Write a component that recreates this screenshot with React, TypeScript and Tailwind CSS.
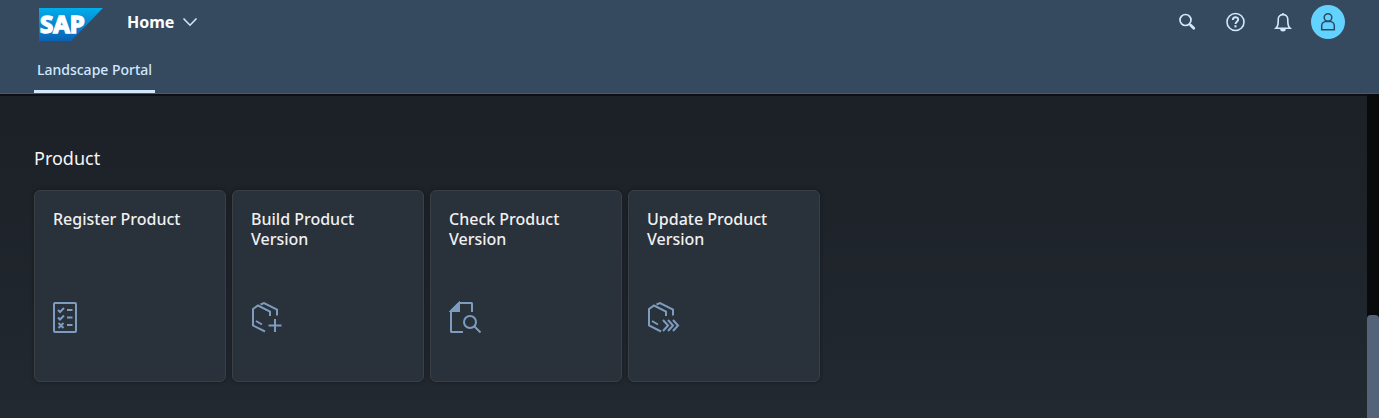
import type { ReactNode } from "react";

const iconProps = {
  fill: "none",
  stroke: "currentColor",
  strokeWidth: 2,
  "aria-hidden": true,
} as const;

function SapLogo() {
  return (
    <svg width="64" height="33" viewBox="0 0 64 33" role="img" aria-label="SAP">
      <defs>
        <linearGradient id="sap-blue" x1="0" y1="0" x2="0" y2="1">
          <stop offset="0" stopColor="#00aeea" />
          <stop offset="0.5" stopColor="#0a86d0" />
          <stop offset="1" stopColor="#0a62b4" />
        </linearGradient>
      </defs>
      <path d="M0 0H64L32 33H0Z" fill="url(#sap-blue)" />
      <text
        x="1"
        y="25"
        fill="#fff"
        stroke="#fff"
        strokeWidth="1.500"
        fontFamily="'Noto Sans', sans-serif"
        fontWeight="700"
        fontSize="24"
      >
        SAP
      </text>
    </svg>
  );
}

function ChecklistIcon() {
  return (
    <svg width="34" height="34" viewBox="0 0 34 34" {...iconProps}>
      <rect x="1" y="2" width="22" height="29" rx="1" />
      <path d="M5 9l2 2 4-4M5 16.500l2 2 4-4M5.500 22l5 5M10.500 22l-5 5M14 9h5.500M14 16.500h5.500M14 24h5.500" />
    </svg>
  );
}

function BoxOutline() {
  return <path d="M19 15V10.500L7 4.500 2 8V24.500L14 30.500M9.500 3.500L13 2 26 8.500V14.500M5 20l6 3.500" />;
}

function BoxAddIcon() {
  return (
    <svg width="34" height="34" viewBox="0 0 34 34" {...iconProps}>
      <BoxOutline />
      <path d="M24 18v13M17.500 24.500h13" />
    </svg>
  );
}

function BoxForwardIcon() {
  return (
    <svg width="34" height="34" viewBox="0 0 34 34" {...iconProps}>
      <BoxOutline />
      <path d="M16 19l5 5.500-5 5.500M21 19l5 5.500-5 5.500M26 19l5 5.500-5 5.500" />
    </svg>
  );
}

function DocumentSearchIcon() {
  return (
    <svg width="34" height="34" viewBox="0 0 34 34" {...iconProps}>
      <path d="M23 11V2.500Q23 2 22.500 2H10L2 10V30.500Q2 31 2.500 31H14" />
      <path d="M2 10L10 2V10Z" fill="currentColor" />
      <circle cx="21" cy="21" r="6" />
      <path d="M25.500 25.500l6 6" />
    </svg>
  );
}

function SearchIcon() {
  return (
    <svg width="18" height="18" viewBox="0 0 18 18" {...iconProps}>
      <circle cx="7.500" cy="7" r="5.500" strokeWidth="1.700" />
      <path d="M11.300 10.800l1.500 1.500" strokeWidth="1.600" />
      <path d="M12.700 12.200l3.100 3.100" strokeWidth="2.800" strokeLinecap="round" />
    </svg>
  );
}

function HelpIcon() {
  return (
    <svg width="20" height="20" viewBox="0 0 20 20" {...iconProps} strokeWidth="1.600">
      <circle cx="10.500" cy="10" r="8.500" />
      <path d="M7.800 8C7.800 4.300 13.200 4.400 13.200 7.600C13.200 9.700 10.500 9.600 10.500 12" strokeWidth="1.900" />
      <path d="M10.500 13.200v2.200" strokeWidth="2" />
    </svg>
  );
}

function BellIcon() {
  return (
    <svg width="18" height="20" viewBox="0 0 18 20" {...iconProps} strokeWidth="1.600">
      <path d="M9 1v1.500M2 16.200H16C13.500 14 13.800 12 13.800 7.500C13.800 1 4.200 1 4.200 7.500C4.200 12 4.500 14 2 16.200Z" />
      <path d="M7 17h4c0 2.300-4 2.300-4 0Z" fill="currentColor" />
    </svg>
  );
}

function PersonIcon() {
  return (
    <svg width="16" height="20" viewBox="0 0 16 20" {...iconProps} strokeWidth="1.500">
      <circle cx="8" cy="5.500" r="3.800" />
      <path d="M5 9.600C2.900 10.200 1.700 11.700 1.700 14V17.800H14.300V14C14.300 11.700 13.100 10.200 11 9.600Z" />
    </svg>
  );
}

function Tile({ title, icon }: { title: string; icon: ReactNode }) {
  return (
    <a
      href="#"
      className="flex h-48 w-48 flex-col justify-between rounded-md border border-[#3b4045] bg-[#29313a] px-[18px] pt-[18px] pb-[46px] shadow-[0_0_4px_rgba(0,0,0,0.35)]"
    >
      <h3 className="text-[16px] leading-5 font-medium text-[#f0f0f0]">{title}</h3>
      <span className="flex text-[#7d9cbf]">{icon}</span>
    </a>
  );
}

const tiles = [
  { title: "Register Product", icon: <ChecklistIcon /> },
  { title: "Build Product Version", icon: <BoxAddIcon /> },
  { title: "Check Product Version", icon: <DocumentSearchIcon /> },
  { title: "Update Product Version", icon: <BoxForwardIcon /> },
];

export default function App() {
  return (
    <div className="flex min-h-screen flex-col bg-[#1c2027] font-['Noto_Sans',sans-serif]">
      <header className="border-b border-[#465a70] bg-[#354a5f]">
        <div className="flex h-11 items-center justify-between pr-[34px] pl-[39px]">
          <div className="flex items-center gap-6">
            <a href="#" className="pt-1">
              <SapLogo />
            </a>
            <button type="button" className="flex items-center gap-2 text-[16px] leading-6 font-bold text-white">
              Home
              <svg width="16" height="10" viewBox="0 0 16 10" {...iconProps} strokeWidth="1.600" className="text-[#d1e8ff]">
                <path d="M1.500 1.500L8 8.200 14.500 1.500" />
              </svg>
            </button>
          </div>
          <div className="flex items-center text-[#d1e8ff]">
            <button type="button" aria-label="Search" className="flex w-12 justify-center">
              <SearchIcon />
            </button>
            <button type="button" aria-label="Help" className="flex w-12 justify-center">
              <HelpIcon />
            </button>
            <button type="button" aria-label="Notifications" className="flex w-12 justify-center">
              <BellIcon />
            </button>
            <button
              type="button"
              aria-label="Profile"
              className="ml-1 flex size-[34px] items-center justify-center rounded-full bg-[#64d2ff] text-[#2b4a63]"
            >
              <PersonIcon />
            </button>
          </div>
        </div>
        <nav className="flex pl-[34px]">
          <a
            href="#"
            aria-current="page"
            className="flex h-[49px] items-center rounded-t-sm border-b-3 border-[#d1e8ff] px-[3px] pt-1 text-[14px] font-medium text-[#d1e8ff]"
          >
            Landscape Portal
          </a>
        </nav>
      </header>

      <div className="flex flex-1">
        <main className="flex-1 border-t-2 border-[#0d0f12] bg-linear-to-b from-[#1c2027] to-[#222930] px-[34px] pt-12 pb-9">
          <h2 className="text-[18px] leading-7 text-[#f5f5f5]">Product</h2>
          <div className="mt-[18px] flex flex-wrap gap-[6px]">
            {tiles.map((tile) => (
              <Tile key={tile.title} {...tile} />
            ))}
          </div>
        </main>
        <div aria-hidden="true" className="flex w-3 flex-col bg-[#090a0c]">
          <div className="flex-[221]" />
          <div className="flex-[103] rounded-t-sm bg-[#556378]" />
        </div>
      </div>
    </div>
  );
}
